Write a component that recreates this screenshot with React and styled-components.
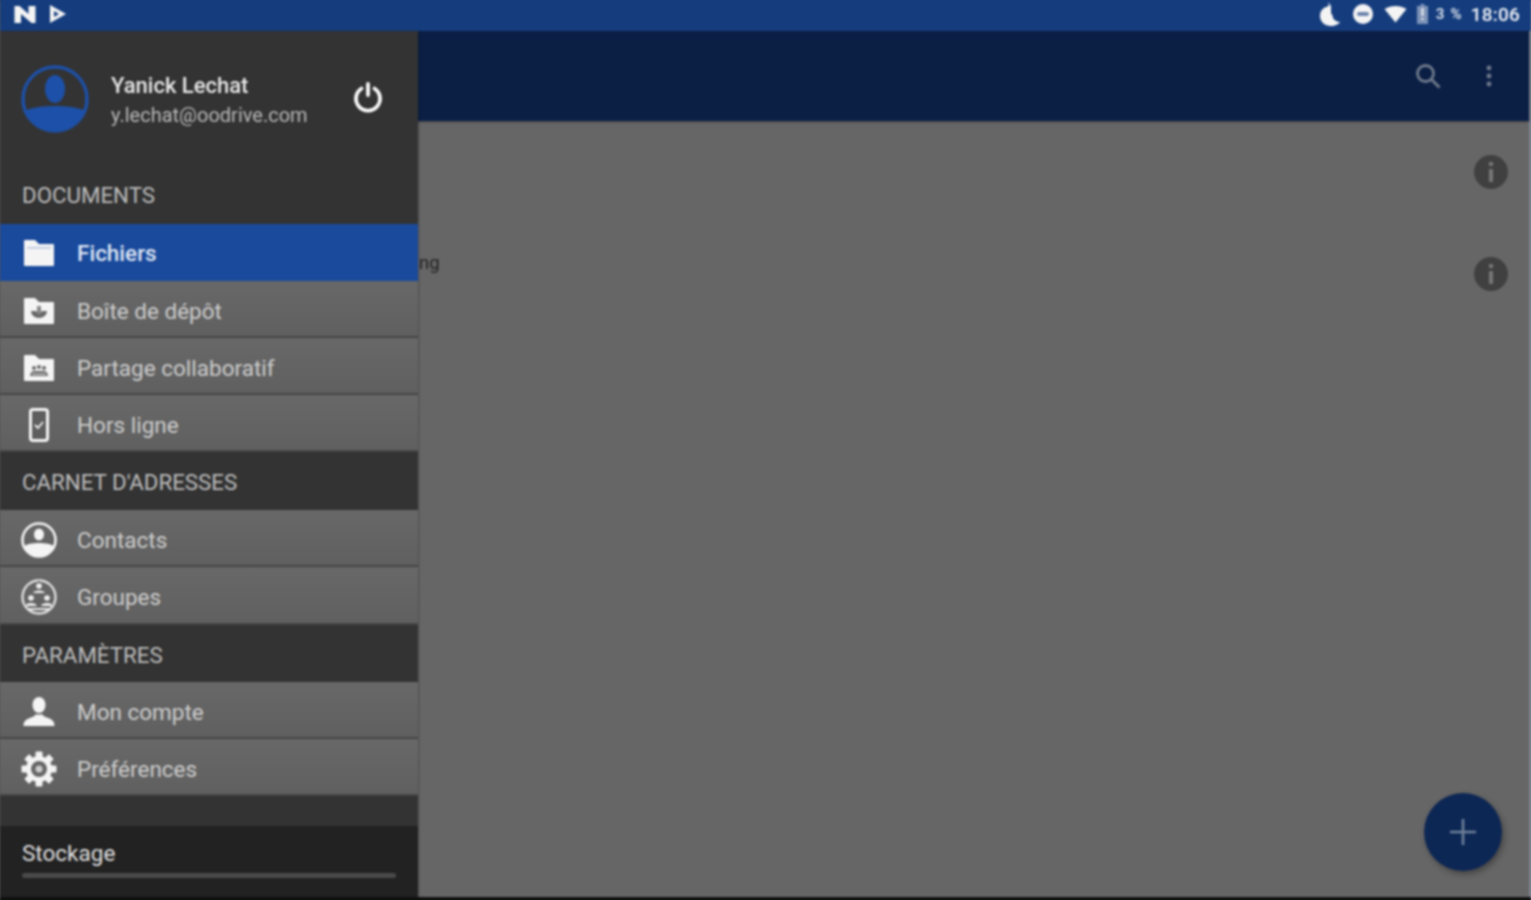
import React from "react";
import styled, { createGlobalStyle } from "styled-components";

const Global = createGlobalStyle`
  html, body { margin: 0; padding: 0; height: 100%; background: #111; overflow: hidden; }
  #root { height: 100%; }
  * { box-sizing: border-box; }
`;

const Screen = styled.div`
  width: 1531px; height: 900px; display: flex; flex-direction: column;
  font-family: Roboto, "Liberation Sans", sans-serif;
  filter: blur(0.8px); background: #111;
  box-shadow: 0 -4px 0 #153d7e, -4px 0 0 #555, 4px 0 0 #7c8490;
`;
const StatusBar = styled.div`
  height: 31px; flex: none; background: #153d7e; display: flex; align-items: center;
  justify-content: space-between; padding: 0 11px 3px 14px; color: #f2f4f8;
`;
const StatusGroup = styled.div`
  display: flex; align-items: center; gap: ${p => p.$gap || 12}px;
`;
const Clock = styled.span`
  font-size: 19px; font-weight: 500; margin-left: -2px; letter-spacing: .2px;
`;
const Percent = styled.span`
  font-size: 15px; font-weight: 700; color: #d3dbe8; letter-spacing: 1.2px; margin-left: -2px;
`;
const Body = styled.div`
  height: 866px; flex: none; display: flex;
`;
const Drawer = styled.aside`
  width: 418px; flex: none; background: #333; display: flex; flex-direction: column;
  box-shadow: 1px 0 2px rgba(0,0,0,.25); z-index: 1;
`;
const Profile = styled.div`
  height: 135px; flex: none; display: flex; align-items: center; padding: 0 34px 0 21px;
`;
const ProfileText = styled.div`
  flex: 1; margin-left: 22px; display: flex; flex-direction: column; gap: 5px; padding-top: 3px;
`;
const UserName = styled.div`
  font-size: 22px; font-weight: 500; color: #e8e8e8; line-height: 25px;
`;
const UserMail = styled.div`
  font-size: 20px; color: #b9b9b9; line-height: 25px;
`;
const PowerIcon = styled.svg`
  margin-bottom: 4px; flex: none;
`;
const Section = styled.div`
  height: ${p => p.$h}px; flex: none; display: flex; align-items: center; padding: ${p => p.$first ? 0 : 2}px 22px 0;
  font-size: 22.3px; color: #bdbdbd; background: #333;
`;
const Item = styled.div`
  height: ${p => p.$h || 57}px; flex: none; display: flex; align-items: center;
  padding: ${p => p.$active ? 0 : 4}px 0 0 20px;
  background: ${p => p.$active
    ? "#1a4a9c"
    : "linear-gradient(#686868, #606060)"};
  border-bottom: ${p => p.$active ? "none" : "2px solid #454545"};
  color: ${p => p.$active ? "#dfe7f5" : "#cdcdcd"};
`;
const ItemIcon = styled.span`
  width: 38px; height: 38px; flex: none; display: flex; align-items: center; justify-content: center;
`;
const ItemLabel = styled.span`
  margin-left: 19px; font-size: 22.5px; font-weight: ${p => p.$active ? 500 : 400};
`;
const Spacer = styled.div`
  height: 30px; flex: none; background: #333;
`;
const Storage = styled.div`
  flex: 1; background: #222; padding: 13px 22px 0; display: flex; flex-direction: column; gap: 5px;
`;
const StorageLabel = styled.div`
  font-size: 22.5px; color: #e0e0e0; line-height: 29px;
`;
const StorageBar = styled.div`
  width: 374px; height: 5px; border-radius: 3px; background: #4a4a4a;
`;
const Main = styled.main`
  flex: 1; display: flex; flex-direction: column; background: #666; border-right: 2px solid #7c8490;
`;
const Toolbar = styled.div`
  height: 90px; flex: none; background: #0b1f45; display: flex; align-items: center; justify-content: flex-end;
  gap: 43px; padding: 0 37px 0 0; box-shadow: 0 1px 2px rgba(0,0,0,.35);
`;
const List = styled.div`
  flex: 1; position: relative; display: flex; flex-direction: column; padding-top: 0;
`;
const Row = styled.div`
  height: 102px; flex: none; display: flex; align-items: center; justify-content: space-between;
  padding: 0 21px 0 1px;
`;
const RowName = styled.span`
  font-size: 18.5px; color: #222; margin-bottom: 23px;
`;
const InfoBadge = styled.span`
  width: 34px; height: 34px; border-radius: 50%; background: #404040; color: #777; display: flex;
  align-items: center; justify-content: center;
`;
const Fab = styled.button`
  position: absolute; right: 27px; bottom: 26px; width: 78px; height: 78px; border-radius: 50%;
  border: 0; padding: 0; background: #0d2755; display: flex; align-items: center; justify-content: center;
  box-shadow: 2px 3px 6px rgba(0,0,0,.35);
`;

const w = "#f4f4f4";

const Folder = ({ children }) => (
  <svg width="34" height="30" viewBox="0 0 34 30">
    <path d="M2 3a1 1 0 0 1 1-1h10l4 4h14a1 1 0 0 1 1 1v20a1 1 0 0 1-1 1H3a1 1 0 0 1-1-1z" fill={w} />
    {children}
  </svg>
);

const Icons = {
  files: <Folder><rect x="5" y="9" width="24" height="1.6" fill="#b9c6de" /></Folder>,
  drop: <Folder><path d="M9 15a8 7 0 0 0 16 0h-4l-4 3-4-3z" fill="#666" /><path d="M15 10h4v5h2l-4 4-4-4h2z" fill="#888" /></Folder>,
  share: <Folder>
    <g fill="#666"><circle cx="12" cy="15" r="2" /><circle cx="17" cy="14" r="2" /><circle cx="22" cy="15" r="2" /><path d="M8 23c0-3 2-5 4-5h10c2 0 4 2 4 5z" /></g>
    <path d="M10 21h14" stroke={w} strokeWidth="1" />
  </Folder>,
  offline: <svg width="22" height="34" viewBox="0 0 22 34"><rect x="2.500" y="1.500" width="17" height="31" rx="2.500" fill="#5e5e5e" stroke={w} strokeWidth="3" /><path d="M7 17l3 3 5-6" fill="none" stroke={w} strokeWidth="1.800" /></svg>,
  contacts: <svg width="38" height="38" viewBox="0 0 38 38"><defs><clipPath id="cc"><circle cx="19" cy="19" r="16" /></clipPath></defs><circle cx="19" cy="19" r="16.500" fill="none" stroke={w} strokeWidth="2.600" /><ellipse cx="19" cy="13.500" rx="5" ry="6" fill={w} /><path d="M2 36V27c4-4 10-5 17-5s13 1 17 5v9z" fill={w} clipPath="url(#cc)" /></svg>,
  groups: <svg width="38" height="38" viewBox="0 0 38 38">
    <circle cx="19" cy="19" r="16.500" fill="none" stroke="#e0e0e0" strokeWidth="2.400" />
    <path d="M19 3v4M5 27l4-2M33 27l-4-2M8 8l4 3M30 8l-4 3" stroke="#666" strokeWidth="2" />
    <g fill="#f0f0f0"><circle cx="19" cy="8" r="2.800" /><path d="M13 15c1-3.500 11-3.500 12 0z" /><circle cx="11" cy="20" r="2.800" /><path d="M5 28c1-4 11-4 12 0z" /><circle cx="27" cy="20" r="2.800" /><path d="M21 28c1-4 11-4 12 0z" /></g>
    <path d="M8 31h22" stroke="#e8e8e8" strokeWidth="2" />
  </svg>,
  account: <svg width="34" height="32" viewBox="0 0 34 32"><ellipse cx="17" cy="9" rx="6.500" ry="8" fill={w} /><path d="M1.500 30c0-3 1-6 5-7.500 4-1.500 6-2 7-4h7c1 2 3 2.500 7 4 4 1.500 5 4.500 5 7.500z" fill={w} /></svg>,
  prefs: <svg width="38" height="38" viewBox="0 0 38 38"><g fill={w}>{[0, 45, 90, 135, 180, 225, 270, 315].map(a => <rect key={a} x="15.500" y="1.500" width="7" height="7" rx="1" transform={`rotate(${a} 19 19)`} />)}</g><circle cx="19" cy="19" r="10.500" fill="#666" stroke={w} strokeWidth="5" /><circle cx="19" cy="19" r="3.500" fill="#ccc" /></svg>,
};

const Nav = ({ icon, label, active, h }) => (
  <Item $active={active} $h={h}>
    <ItemIcon>{Icons[icon]}</ItemIcon>
    <ItemLabel $active={active}>{label}</ItemLabel>
  </Item>
);

const Info = () => (
  <InfoBadge>
    <svg width="8" height="22" viewBox="0 0 8 22"><circle cx="4" cy="3" r="2.300" fill="currentColor" /><rect x="2" y="8" width="4" height="13" rx="1" fill="currentColor" /></svg>
  </InfoBadge>
);

export default function App() {
  return (
    <>
      <Global />
      <Screen>
        <StatusBar>
          <StatusGroup $gap={13}>
            <svg width="22" height="19" viewBox="0 0 22 19"><path d="M0.500 1h5l9 8V1h7v17h-4L7 9v9H0.500z" fill={w} /></svg>
            <svg width="18" height="19" viewBox="0 0 18 19"><path d="M1 0l16 9L1 18z" fill={w} /><path d="M5 6l5 3-5 3z" fill="#153d7e" /></svg>
          </StatusGroup>
          <StatusGroup $gap={10}>
            <svg width="24" height="26" viewBox="0 0 24 26"><path d="M10 1l1 4c-5 1-9 4-9 10 0 6 5 10 11 10 4 0 8-2 9-4-3 0-6-2-7-4 0-3-1-3-2-5V5z" fill={w} /></svg>
            <svg width="22" height="22" viewBox="0 0 22 22"><circle cx="11" cy="11" r="10" fill={w} /><rect x="5" y="9" width="12" height="4" rx="2" fill="#6d84ad" /></svg>
            <svg width="23" height="17" viewBox="0 0 23 17"><path d="M0.500 3C7 -1 16 -1 22.500 3L11.500 16.500z" fill={w} /></svg>
            <svg width="11" height="20" viewBox="0 0 11 20"><path d="M3.500 0h4v2H11v18H0V2h3.500z" fill="#7d93b8" /><path d="M4.500 4h2v8h-2zM4.500 14h2v2h-2z" fill={w} /></svg>
            <Percent>3 %</Percent>
            <Clock>18:06</Clock>
          </StatusGroup>
        </StatusBar>
        <Body>
          <Drawer>
            <Profile>
              <svg width="68" height="68" viewBox="0 0 68 68">
                <defs><clipPath id="av"><circle cx="34" cy="34" r="31" /></clipPath></defs>
                <circle cx="34" cy="34" r="32" fill="none" stroke="#1d50a8" strokeWidth="3.500" />
                <ellipse cx="34" cy="24" rx="10" ry="14" fill="#1d50a8" />
                <path d="M0 68V48c9-6 22-7 34-7s25 1 34 7v20z" fill="#1d50a8" clipPath="url(#av)" />
              </svg>
              <ProfileText>
                <UserName>Yanick Lechat</UserName>
                <UserMail>y.lechat@oodrive.com</UserMail>
              </ProfileText>
              <PowerIcon width="32" height="32" viewBox="0 0 32 32" fill="none" stroke="#fafafa" strokeWidth="3.800" strokeLinecap="round">
                <path d="M9.500 7.500a12 12 0 1 0 13 0" /><path d="M16 3v11" />
              </PowerIcon>
            </Profile>
            <Section $h={58} $first>DOCUMENTS</Section>
            <Nav icon="files" label="Fichiers" active />
            <Nav icon="drop" label="Boîte de dépôt" />
            <Nav icon="share" label="Partage collaboratif" />
            <Nav icon="offline" label="Hors ligne" />
            <Section $h={58}>CARNET D'ADRESSES</Section>
            <Nav icon="contacts" label="Contacts" />
            <Nav icon="groups" label="Groupes" h={58} />
            <Section $h={57}>PARAMÈTRES</Section>
            <Nav icon="account" label="Mon compte" />
            <Nav icon="prefs" label="Préférences" />
            <Spacer />
            <Storage>
              <StorageLabel>Stockage</StorageLabel>
              <StorageBar />
            </Storage>
          </Drawer>
          <Main>
            <Toolbar>
              <svg width="30" height="30" viewBox="0 0 30 30" fill="none" stroke="#6f7a8a" strokeWidth="2.800">
                <circle cx="12.500" cy="12.500" r="8" /><path d="M18.500 18.500l8 8" />
              </svg>
              <svg width="6" height="24" viewBox="0 0 6 24" fill="#6f7a8a">
                <circle cx="3" cy="4" r="2.400" /><circle cx="3" cy="12" r="2.400" /><circle cx="3" cy="20" r="2.400" />
              </svg>
            </Toolbar>
            <List>
              <Row><span /><Info /></Row>
              <Row><RowName>ng</RowName><Info /></Row>
              <Fab aria-label="Ajouter">
                <svg width="30" height="30" viewBox="0 0 30 30" stroke="#6f8099" strokeWidth="2.600"><path d="M15 2v26M2 15h26" /></svg>
              </Fab>
            </List>
          </Main>
        </Body>
      </Screen>
    </>
  );
}
